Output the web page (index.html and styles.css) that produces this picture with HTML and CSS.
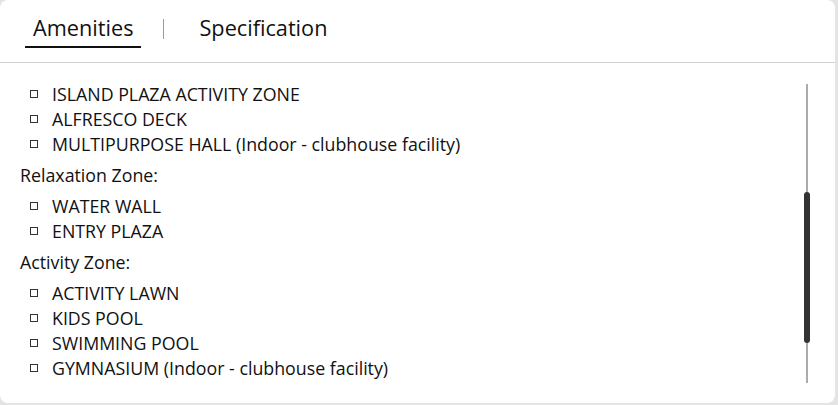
FILE: index.html
```html
<!DOCTYPE html>
<html lang="en">
<head>
<meta charset="utf-8">
<title>Amenities</title>
<link rel="stylesheet" href="styles.css">
</head>
<body>
<div class="card">
  <div class="tabs">
    <div class="tab active">Amenities</div>
    <div class="sep"></div>
    <div class="tab">Specification</div>
  </div>
  <div class="content">
    <ul class="list">
      <li>ISLAND PLAZA ACTIVITY ZONE</li>
      <li>ALFRESCO DECK</li>
      <li>MULTIPURPOSE HALL (Indoor - clubhouse facility)</li>
    </ul>
    <div class="zone">Relaxation Zone:</div>
    <ul class="list">
      <li>WATER WALL</li>
      <li>ENTRY PLAZA</li>
    </ul>
    <div class="zone">Activity Zone:</div>
    <ul class="list">
      <li>ACTIVITY LAWN</li>
      <li>KIDS POOL</li>
      <li>SWIMMING POOL</li>
      <li>GYMNASIUM (Indoor - clubhouse facility)</li>
    </ul>
    <div class="scrollbar"><div class="thumb"></div></div>
  </div>
</div>
</body>
</html>
```
FILE: styles.css
```css
html, body {
  margin: 0;
  padding: 0;
}
body {
  background: #e4e4e4;
  width: 838px;
  height: 405px;
  overflow: hidden;
  font-family: "Open Sans", "Noto Sans", sans-serif;
  color: #111;
}
.card {
  width: 835px;
  height: 403px;
  background: #fff;
  border-radius: 8px;
  overflow: hidden;
}
.tabs {
  display: flex;
  align-items: flex-start;
  height: 63px;
  box-sizing: border-box;
  border-bottom: 1px solid #d2d2d2;
  padding: 15px 0 0 25px;
}
.tab {
  font-size: 21.7px;
  line-height: 26px;
  padding: 0 8px 5px;
  color: #111;
}
.tab.active {
  border-bottom: 2px solid #111;
}
.sep {
  width: 1px;
  height: 20px;
  background: #9a9a9a;
  margin: 4px 27px 0 22px;
}
.content {
  position: relative;
  padding: 18.5px 0 0 20px;
  height: 340px;
  box-sizing: border-box;
}
.list {
  list-style: none;
  margin: 0;
  padding: 0 0 0 10px;
}
.list li {
  font-size: 17.8px;
  line-height: 25px;
  display: flex;
  align-items: center;
}
.list li::before {
  content: "";
  width: 6px;
  height: 6px;
  border: 1px solid #333;
  margin-right: 14px;
  flex: none;
  position: relative;
  top: 0;
}
.zone {
  font-size: 17.8px;
  line-height: 25px;
  margin: 6.5px 0 5.5px;
}
.scrollbar {
  position: absolute;
  left: 806px;
  top: 21px;
  width: 2px;
  height: 299px;
  background: #acacac;
}
.thumb {
  position: absolute;
  left: -2px;
  top: 108px;
  width: 6px;
  height: 151px;
  background: #333;
  border-radius: 3px;
}
```
